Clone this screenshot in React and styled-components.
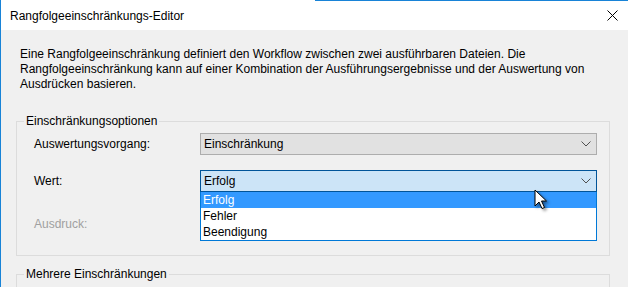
import styled, { createGlobalStyle } from 'styled-components';

const GlobalStyle = createGlobalStyle`
  html, body {
    margin: 0;
    padding: 0;
    background: #f0f0f0;
  }
  body {
    font-family: "Liberation Sans", Arial, sans-serif;
    font-size: 12px;
    color: #000;
  }
`;

const Window = styled.div`
  width: 628px;
  height: 287px;
  overflow: hidden;
  border-left: 1px solid #1883d7;
  box-sizing: border-box;
  background: #f0f0f0;
`;

const TitleBar = styled.div`
  height: 30px;
  background: #fff;
  display: flex;
  align-items: center;
  justify-content: space-between;
  padding: 0 10px 0 9px;
  border-top: 1px solid transparent;
  border-image: linear-gradient(to right, #fff 0 50%, #1883d7 50% 100%) 1;
  box-sizing: border-box;
`;

const Title = styled.span`
  font-size: 12px;
  padding-top: 1px;
`;

const Body = styled.div`
  padding: 17px 18px 0 15px;
`;

const Description = styled.p`
  margin: 0 0 22px 4px;
  line-height: 15px;
`;

const Group = styled.fieldset`
  margin: 0 0 11px 0;
  border: 1px solid #dcdcdc;
  padding: 4px 12px 16px 17px;
  min-width: 0;
`;

const Legend = styled.legend`
  padding: 0 2px;
  margin-left: -10px;
  line-height: 15px;
`;

const Row = styled.div`
  display: flex;
  align-items: center;
  min-height: ${p => p.$h || 22}px;
  margin-bottom: ${p => p.$mb || 0}px;
  position: relative;
`;

const Label = styled.div`
  width: 166px;
  color: ${p => (p.$disabled ? '#a0a0a0' : '#000')};
`;

const Combo = styled.div`
  flex: 1;
  height: 22px;
  box-sizing: border-box;
  display: flex;
  align-items: center;
  justify-content: space-between;
  padding: 0 5px 0 3px;
  background: ${p => (p.$active ? '#cce4f7' : '#e1e1e1')};
  border: 1px solid ${p => (p.$active ? '#005499' : '#adadad')};
`;

const DropList = styled.ul`
  position: absolute;
  left: 166px;
  right: 0;
  top: 22px;
  margin: 0;
  padding: 0;
  list-style: none;
  background: #fff;
  border: 1px solid #0078d7;
  border-top: none;
  z-index: 2;
`;

const Item = styled.li`
  height: 16px;
  line-height: 16px;
  padding-left: 2px;
  background: ${p => (p.$selected ? '#3399ff' : 'transparent')};
  color: ${p => (p.$selected ? '#fff' : '#000')};
`;

const Cursor = styled.svg`
  position: absolute;
  left: 534px;
  top: 189px;
  z-index: 3;
  filter: drop-shadow(2px 2px 1.5px rgba(0, 0, 0, 0.45));
`;

const Chevron = () => (
  <svg width="10" height="6" viewBox="0 0 10 6">
    <polyline points="0.5,0.5 5,5 9.5,0.5" fill="none" stroke="#505050" strokeWidth="1" />
  </svg>
);

const CloseIcon = () => (
  <svg width="11" height="11" viewBox="0 0 11 11">
    <path d="M0.5 0.5 L10.5 10.5 M10.5 0.5 L0.5 10.5" stroke="#000" strokeWidth="1" />
  </svg>
);

export default function App() {
  return (
    <>
      <GlobalStyle />
      <Window>
        <TitleBar>
          <Title>Rangfolgeeinschränkungs-Editor</Title>
          <CloseIcon />
        </TitleBar>
        <Body>
          <Description>
            Eine Rangfolgeeinschränkung definiert den Workflow zwischen zwei ausführbaren Dateien. Die
            <br />
            Rangfolgeeinschränkung kann auf einer Kombination der Ausführungsergebnisse und der Auswertung von
            <br />
            Ausdrücken basieren.
          </Description>
          <Group>
            <Legend>Einschränkungsoptionen</Legend>
            <Row $mb={15}>
              <Label>Auswertungsvorgang:</Label>
              <Combo>
                <span>Einschränkung</span>
                <Chevron />
              </Combo>
            </Row>
            <Row $mb={16}>
              <Label>Wert:</Label>
              <Combo $active>
                <span>Erfolg</span>
                <Chevron />
              </Combo>
              <DropList>
                <Item $selected>Erfolg</Item>
                <Item>Fehler</Item>
                <Item>Beendigung</Item>
              </DropList>
            </Row>
            <Row $h={31}>
              <Label $disabled>Ausdruck:</Label>
            </Row>
          </Group>
          <Group>
            <Legend>Mehrere Einschränkungen</Legend>
            <Row $h={40} />
          </Group>
        </Body>
        <Cursor width="16" height="22" viewBox="0 0 16 22">
          <path
            d="M1 1 L1 17 L5 13 L8 19.5 L10.5 18.5 L7.5 12 L12.5 12 Z"
            fill="#fff"
            stroke="#000"
            strokeWidth="1"
            strokeLinejoin="miter"
          />
        </Cursor>
      </Window>
    </>
  );
}
